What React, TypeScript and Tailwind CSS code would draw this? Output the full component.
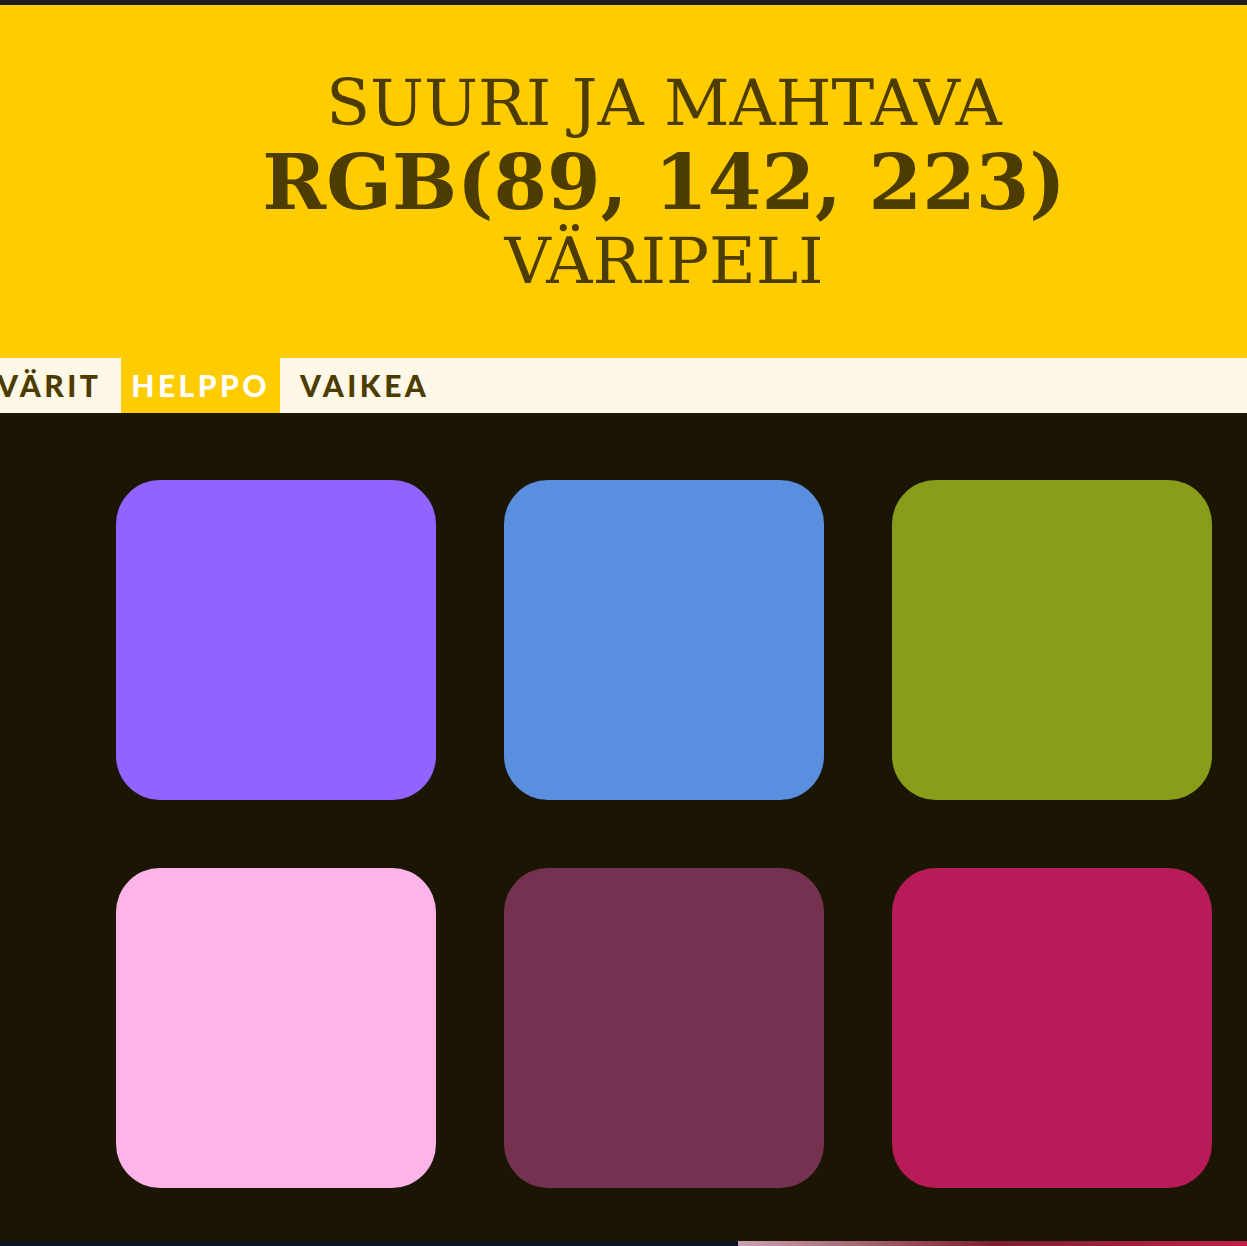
import React from "react";

const colors = ["#9164ff", "#5a8edf", "#899d1b", "#fdb4e9", "#743250", "#b91b59"];

export default function App() {
  return (
    <div className="w-[1247px] h-[1246px] overflow-hidden bg-[#1b1503] flex flex-col">
      <div className="h-[5px] bg-[#1c1c1c] shrink-0" />
      <div className="w-[1328px] shrink-0 flex flex-col">
        <header className="h-[353px] bg-[#ffcc00] flex flex-col items-center justify-center text-[#4d3c00] font-['DejaVu_Serif',serif] leading-none">
          <div className="text-[64px] leading-[80px]">SUURI JA MAHTAVA</div>
          <div className="text-[77px] font-bold leading-[78px]">RGB(89, 142, 223)</div>
          <div className="text-[64px] leading-[80px]">VÄRIPELI</div>
        </header>
        <nav className="h-[55px] bg-[#fff8e6] flex items-stretch gap-[10px] -ml-[13px] font-['Lato',sans-serif] font-black text-[30px] tracking-[0.115em] text-[#4d3c00]">
          <div className="px-[10px] flex items-center">VÄRIT</div>
          <div className="px-[10px] flex items-center bg-[#ffcc00] text-white">HELPPO</div>
          <div className="px-[10px] flex items-center">VAIKEA</div>
        </nav>
        <main className="h-[828px] bg-[#1b1503] flex justify-center pt-[67px]">
          <div className="grid grid-cols-[320px_320px_320px] gap-[68px] content-start">
            {colors.map((c) => (
              <div key={c} className="w-[320px] h-[320px] rounded-[44px]" style={{ backgroundColor: c }} />
            ))}
          </div>
        </main>
      </div>
      <div className="h-[5px] shrink-0 flex">
        <div className="w-[738px] bg-[#0b1520]" />
        <div className="flex-1 bg-gradient-to-r from-[#c9a3b5] via-[#7a1f33] to-[#c02048]" />
      </div>
    </div>
  );
}
